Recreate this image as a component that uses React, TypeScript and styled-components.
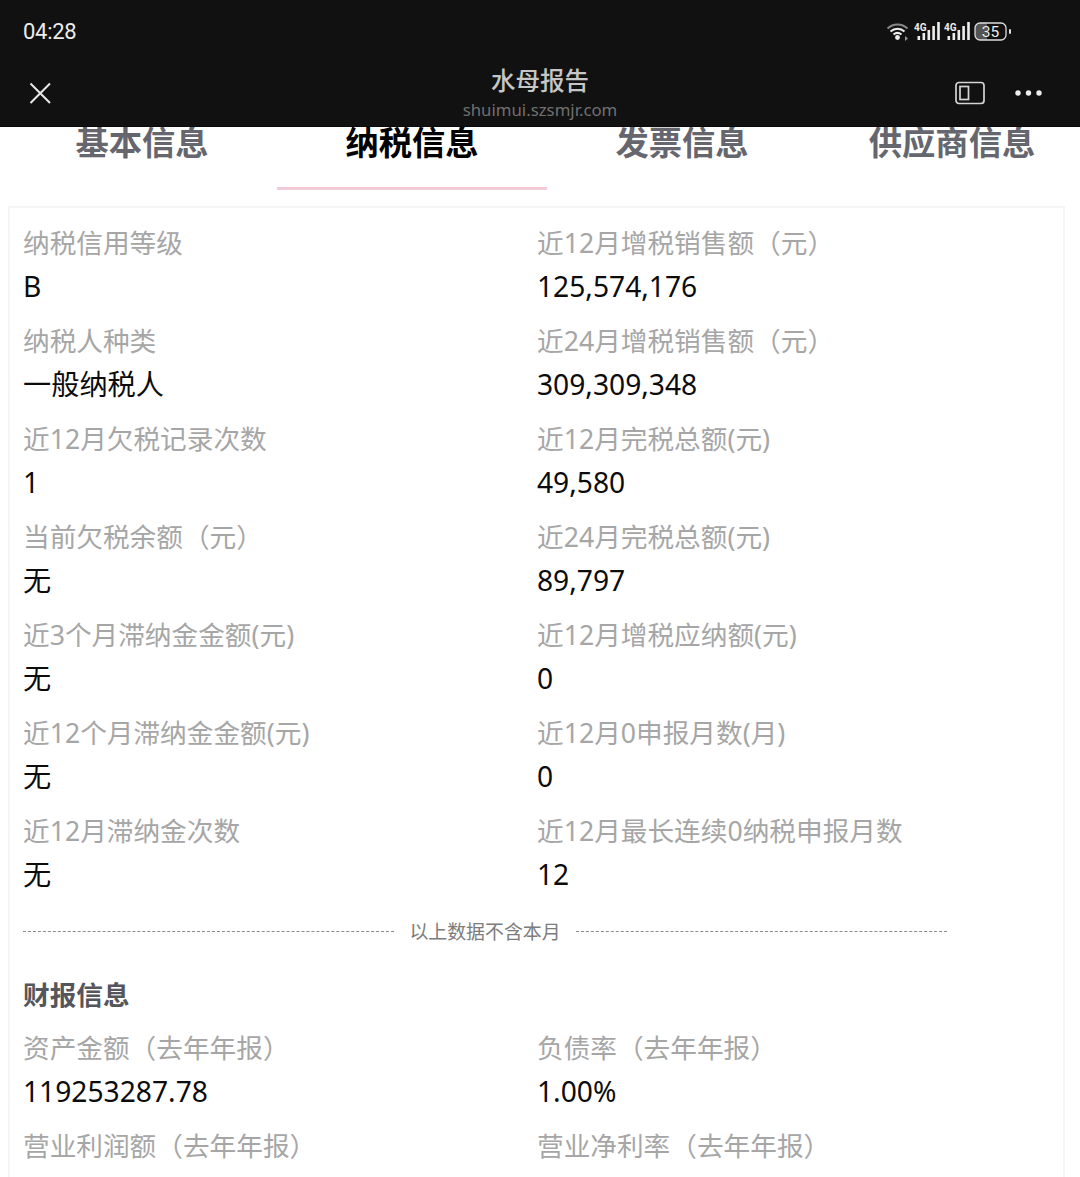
import React, { FunctionComponent } from 'react';
import styled, { createGlobalStyle } from 'styled-components';

const fontStack = '"Noto Sans", "Noto Sans CJK SC", sans-serif';

const GlobalStyle = createGlobalStyle`
  html, body {
    margin: 0;
    padding: 0;
    background: #fff;
    font-family: ${fontStack};
  }
`;

const Page = styled.div`
  width: 1080px;
  height: 1177px;
  overflow: hidden;
  background: #fff;
`;

const Header = styled.header`
  position: relative;
  z-index: 1;
  height: 127px;
  box-sizing: border-box;
  background: #111;
  border-bottom: 1px solid #0a0a0a;
`;

const StatusBar = styled.div`
  display: flex;
  align-items: center;
  justify-content: space-between;
  height: 62px;
  padding: 0 69px 0 23px;
`;

const Clock = styled.span`
  margin-top: 2px;
  font-family: Roboto, sans-serif;
  font-size: 22px;
  letter-spacing: -0.3px;
  line-height: 60px;
  color: #ececec;
`;

const StatusIcons = styled.div`
  display: flex;
  align-items: center;
  gap: 4px;
`;

const NavBar = styled.div`
  display: grid;
  grid-template-columns: 1fr auto 1fr;
  align-items: start;
  padding: 0 27px;
`;

const CloseButton = styled.div`
  display: flex;
  align-items: center;
  height: 62px;
`;

const Titles = styled.div`
  display: flex;
  flex-direction: column;
  align-items: center;
  transform: translateY(2px);
`;

const Title = styled.div`
  font-size: 24.5px;
  font-weight: 500;
  line-height: 33px;
  margin-bottom: 1px;
  color: #c6c6c6;
`;

const Subtitle = styled.div`
  font-size: 16.8px;
  line-height: 24px;
  color: #707070;
`;

const NavActions = styled.div`
  display: flex;
  justify-content: flex-end;
  align-items: center;
  gap: 30px;
  height: 62px;
  padding-right: 11px;
`;

const TabBar = styled.nav`
  display: flex;
  width: 1080px;
  height: 63px;
  padding-left: 7px;
  box-sizing: border-box;
  overflow: hidden;
`;

const Tab = styled.div<{ $active?: boolean }>`
  flex: 0 0 270px;
  height: 63px;
  box-sizing: border-box;
  text-align: center;
  font-size: 33.3px;
  font-weight: 700;
  line-height: 30px;
  white-space: nowrap;
  color: ${({ $active }) => ($active ? '#000' : '#66666e')};
  border-bottom: 3px solid ${({ $active }) => ($active ? '#f3cbd6' : 'transparent')};
`;

const Card = styled.section`
  margin: 16px 15px 0 8px;
  padding: 13px 13px 0;
  height: 1000px;
  box-sizing: border-box;
  border: 2px solid #f5f5f5;
`;

const InfoGrid = styled.div`
  display: grid;
  grid-template-columns: 514px 1fr;
`;

const InfoItem = styled.div`
  height: 98px;
`;

const Label = styled.div`
  font-size: 26.67px;
  line-height: 44px;
  color: #a6a6a6;
  white-space: nowrap;
`;

const Value = styled.div`
  font-size: 28.2px;
  line-height: 42px;
  color: #0c0c0c;
  white-space: nowrap;
`;

const Divider = styled.div`
  display: flex;
  align-items: center;
  width: 924px;
  gap: 15px;
  height: 38px;
  margin-top: 5px;
  font-size: 18.9px;
  color: #7c7c7c;

  &::before,
  &::after {
    content: '';
    flex: 1;
    border-top: 1px dashed #8a8a8a;
  }
`;

const SectionTitle = styled.h3`
  margin: 0;
  padding-top: 25px;
  height: 76px;
  box-sizing: border-box;
  font-size: 26.67px;
  font-weight: 700;
  line-height: 40px;
  color: #55555c;
`;

interface Info {
  label: string;
  value?: string;
}

const taxRows: Info[] = [
  { label: '纳税信用等级', value: 'B' },
  { label: '近12月增税销售额（元）', value: '125,574,176' },
  { label: '纳税人种类', value: '一般纳税人' },
  { label: '近24月增税销售额（元）', value: '309,309,348' },
  { label: '近12月欠税记录次数', value: '1' },
  { label: '近12月完税总额(元)', value: '49,580' },
  { label: '当前欠税余额（元）', value: '无' },
  { label: '近24月完税总额(元)', value: '89,797' },
  { label: '近3个月滞纳金金额(元)', value: '无' },
  { label: '近12月增税应纳额(元)', value: '0' },
  { label: '近12个月滞纳金金额(元)', value: '无' },
  { label: '近12月0申报月数(月)', value: '0' },
  { label: '近12月滞纳金次数', value: '无' },
  { label: '近12月最长连续0纳税申报月数', value: '12' },
];

const financeRows: Info[] = [
  { label: '资产金额（去年年报）', value: '119253287.78' },
  { label: '负债率（去年年报）', value: '1.00%' },
  { label: '营业利润额（去年年报）' },
  { label: '营业净利率（去年年报）' },
];

const tabs = ['基本信息', '纳税信息', '发票信息', '供应商信息'];

const InfoList: FunctionComponent<{ rows: Info[] }> = ({ rows }) => (
  <InfoGrid>
    {rows.map((row) => (
      <InfoItem key={row.label}>
        <Label>{row.label}</Label>
        {row.value && <Value>{row.value}</Value>}
      </InfoItem>
    ))}
  </InfoGrid>
);

const WifiIcon = () => (
  <svg width="24" height="20" viewBox="0 0 24 20" fill="none">
    <path d="M1.5 7.5C7 2 16 2 21.5 7.5" stroke="#888" strokeWidth="2" />
    <path d="M4.5 10.5C8.5 6.8 14.5 6.8 18.5 10.5" stroke="#eee" strokeWidth="2" />
    <path d="M7.5 13.5C10 11.5 13 11.5 15.5 13.5" stroke="#eee" strokeWidth="2" />
    <circle cx="11.5" cy="16.5" r="2.4" fill="#eee" />
    <path d="M19 15l3 2.5-3 2.5z" fill="#999" />
  </svg>
);

const SignalIcon = () => (
  <svg width="26" height="18" viewBox="0 0 26 18" fill="#eee">
    <text x="0" y="8.5" fontSize="10" fontWeight="700" fontFamily="Roboto, sans-serif">
      4G
    </text>
    <rect x="3.5" y="14" width="2.6" height="4" />
    <rect x="8.5" y="11" width="2.6" height="7" />
    <rect x="13.5" y="8" width="2.6" height="10" />
    <rect x="18.3" y="4" width="2.6" height="14" />
    <rect x="23.2" y="0" width="2.6" height="18" />
  </svg>
);

const BatteryIcon = () => (
  <svg width="37" height="19" viewBox="0 0 37 19" fill="none">
    <defs>
      <clipPath id="battery-body">
        <rect x="1" y="1" width="31" height="17" rx="5" />
      </clipPath>
    </defs>
    <rect x="1" y="1" width="12" height="17" fill="#555" clipPath="url(#battery-body)" />
    <rect x="1" y="1" width="31" height="17" rx="5" stroke="#ddd" strokeWidth="1.3" />
    <rect x="35" y="7" width="2" height="5" rx="1" fill="#ddd" />
    <text x="16.5" y="15" textAnchor="middle" fontSize="15.5" fontFamily="Roboto, sans-serif" fill="#eee">
      35
    </text>
  </svg>
);

const CloseIcon = () => (
  <svg width="26" height="26" viewBox="0 0 26 26" fill="none" stroke="#e8e8e8" strokeWidth="2">
    <path d="M3.5 3.5l19.5 19.5M23 3.5L3.5 23" />
  </svg>
);

const SidebarIcon = () => (
  <svg width="30" height="24" viewBox="0 0 30 24" fill="none" stroke="#d4d4d4">
    <rect x="1" y="1.5" width="28" height="21" rx="3" strokeWidth="1.7" />
    <rect x="5" y="5.5" width="8.5" height="13" strokeWidth="1.7" />
  </svg>
);

const MoreIcon = () => (
  <svg width="27" height="6" viewBox="0 0 27 6" fill="#eee">
    <circle cx="3" cy="3" r="2.7" />
    <circle cx="13.5" cy="3" r="2.7" />
    <circle cx="24" cy="3" r="2.7" />
  </svg>
);

const App: FunctionComponent = () => (
  <Page>
    <GlobalStyle />
    <Header>
      <StatusBar>
        <Clock>04:28</Clock>
        <StatusIcons>
          <WifiIcon />
          <SignalIcon />
          <SignalIcon />
          <BatteryIcon />
        </StatusIcons>
      </StatusBar>
      <NavBar>
        <CloseButton>
          <CloseIcon />
        </CloseButton>
        <Titles>
          <Title>水母报告</Title>
          <Subtitle>shuimui.szsmjr.com</Subtitle>
        </Titles>
        <NavActions>
          <SidebarIcon />
          <MoreIcon />
        </NavActions>
      </NavBar>
    </Header>
    <TabBar>
      {tabs.map((tab) => (
        <Tab key={tab} $active={tab === '纳税信息'}>
          {tab}
        </Tab>
      ))}
    </TabBar>
    <Card>
      <InfoList rows={taxRows} />
      <Divider>以上数据不含本月</Divider>
      <SectionTitle>财报信息</SectionTitle>
      <InfoList rows={financeRows} />
    </Card>
  </Page>
);

export default App;
